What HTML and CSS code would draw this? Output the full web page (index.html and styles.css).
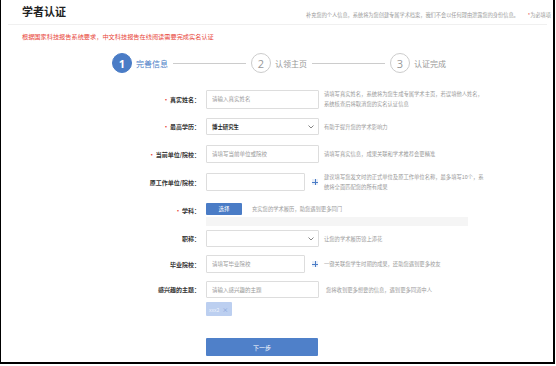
FILE: index.html
```html
<!DOCTYPE html>
<html lang="zh-CN">
<head>
  <meta charset="UTF-8" />
  <meta name="viewport" content="width=device-width, initial-scale=1.0"/>
  <title>学者认证</title>
  <link rel="stylesheet" href="styles.css">
</head>
<body>
  <div class="frame">
    <div class="header">
      <h1>学者认证</h1>
      <div class="notes">
        <span>补充您的个人信息，系统将为您创建专属学术档案，我们不会以任何理由泄露您的身份信息。</span>
        <span><i class="star">*</i>为必填项</span>
      </div>
    </div>

    <p class="notice">根据国家科技报告系统要求，中文科技报告在线阅读需要完成实名认证</p>

    <div class="steps">
      <div class="step active"><span class="num">1</span><span class="name">完善信息</span></div>
      <div class="bar"></div>
      <div class="step"><span class="num">2</span><span class="name">认领主页</span></div>
      <div class="bar"></div>
      <div class="step"><span class="num">3</span><span class="name">认证完成</span></div>
    </div>

    <div class="form">
      <div class="row r1">
        <label class="req">真实姓名：</label>
        <input type="text" placeholder="请输入真实姓名" />
        <p class="help">请填写真实姓名，系统将为您生成专属学术主页，若误填他人姓名，<br>系统核查后将取消您的实名认证信息</p>
      </div>

      <div class="row r2">
        <label class="req">最高学历：</label>
        <div class="select filled"><span>博士研究生</span>
          <svg width="6" height="4" viewBox="0 0 6 4"><path d="M0.5 0.5 L3 3 L5.5 0.5" fill="none" stroke="#666" stroke-width="0.8"/></svg>
        </div>
        <p class="help">有助于提升您的学术影响力</p>
      </div>

      <div class="row r3">
        <label class="req">当前单位/院校：</label>
        <input type="text" placeholder="请填写当前单位或院校" />
        <p class="help">请填写真实信息，成果关联和学术推荐会更精准</p>
      </div>

      <div class="row r4">
        <label>原工作单位/院校：</label>
        <input type="text" class="short" />
        <span class="plus"></span>
        <p class="help">建议填写您发文时的正式单位及原工作单位名称，最多填写10个，系<br>统将全面匹配您的所有成果</p>
      </div>

      <div class="row r5">
        <label class="req">学科：</label>
        <div class="subject">
          <div class="subject-top">
            <button class="pick">选择</button>
            <p class="help">充实您的学术履历，助您遇到更多同门</p>
          </div>
          <div class="subject-list"></div>
        </div>
      </div>

      <div class="row r6">
        <label>职称：</label>
        <div class="select"><span></span>
          <svg width="6" height="4" viewBox="0 0 6 4"><path d="M0.5 0.5 L3 3 L5.5 0.5" fill="none" stroke="#666" stroke-width="0.8"/></svg>
        </div>
        <p class="help">让您的学术履历锦上添花</p>
      </div>

      <div class="row r7">
        <label>毕业院校：</label>
        <input type="text" class="short" placeholder="请填写毕业院校" />
        <span class="plus"></span>
        <p class="help">一键关联您学生时期的成果，还助您遇到更多校友</p>
      </div>

      <div class="row r8">
        <label>感兴趣的主题：</label>
        <input type="text" placeholder="请输入感兴趣的主题" />
        <p class="help wide">您将收到更多想要的信息，遇到更多同道中人</p>
      </div>

      <div class="row r9">
        <label></label>
        <span class="tag">xxx2 <b>×</b></span>
      </div>

      <div class="row r10">
        <label></label>
        <button class="next">下一步</button>
      </div>
    </div>
  </div>
</body>
</html>
```

FILE: styles.css
```css
body {
  margin: 0;
  font-family: "Noto Sans CJK SC", "Noto Sans", sans-serif;
  background: #fff;
  color: #333;
}

.frame {
  width: 552px;
  height: 362px;
  border-left: 1px solid #000;
  border-right: 2px solid #000;
  border-bottom: 2px solid #000;
  overflow: hidden;
}

.header {
  display: flex;
  justify-content: space-between;
  align-items: flex-end;
  height: 25px;
  margin: 0 6px 0 7px;
  padding-left: 14px;
  border-bottom: 1px solid #f0f0f0;
  box-sizing: border-box;
}

.header h1 {
  margin: 0 0 7px;
  font-size: 11px;
  line-height: 12px;
  color: #222;
}

.notes {
  display: flex;
  gap: 9px;
  margin: 0 -4px 6px 0;
  font-size: 5.2px;
  line-height: 6px;
  color: #999;
}

.star {
  font-style: normal;
  color: #e53c32;
}

.notice {
  margin: 8px 0 0 21px;
  font-size: 6.2px;
  line-height: 7px;
  color: #e8463a;
}

.steps {
  display: flex;
  align-items: center;
  margin: 13px 0 0 111px;
}

.step {
  display: flex;
  align-items: center;
  gap: 4px;
}

.num {
  width: 18px;
  height: 18px;
  border: 1px solid #ccc;
  border-radius: 50%;
  display: flex;
  align-items: center;
  justify-content: center;
  font-family: "Open Sans", sans-serif;
  font-size: 11px;
  color: #999;
}

.name {
  font-size: 8px;
  color: #999;
}

.step.active .num {
  background: #4a7cc6;
  border-color: #4a7cc6;
  color: #fff;
  font-weight: bold;
}

.step.active .name {
  color: #4a7cc6;
}

.bar {
  width: 73px;
  height: 1px;
  background: #ccc;
  margin: 0 5px;
}

.form {
  margin-top: 16px;
}

.row {
  display: flex;
  align-items: center;
}

.row label {
  flex: 0 0 199px;
  text-align: right;
  margin-right: 6px;
  font-size: 6px;
  font-weight: bold;
  color: #333;
}

.row label.req::before {
  content: "•";
  color: #e8463a;
  margin-right: 1px;
}

.row input {
  width: 113px;
  height: 18px;
  box-sizing: border-box;
  border: 1px solid #ddd;
  border-radius: 1px;
  padding: 0 5px;
  font-family: inherit;
  font-size: 5.5px;
  color: #333;
  outline: none;
}

.row input.short {
  width: 99px;
}

.row input::placeholder {
  color: #999;
}

.select {
  width: 113px;
  height: 17px;
  box-sizing: border-box;
  border: 1px solid #ddd;
  border-radius: 1px;
  padding: 0 4px 0 5px;
  display: flex;
  align-items: center;
  justify-content: space-between;
  font-size: 5.4px;
}

.select.filled span {
  font-weight: bold;
  color: #222;
}

.help {
  margin: 0 0 0 5px;
  font-size: 5.3px;
  line-height: 10px;
  color: #999;
}

.help.wide {
  margin-left: 7px;
}

.plus {
  width: 6px;
  height: 6px;
  margin-left: 7px;
  margin-right: 1px;
  position: relative;
  background: #e8eef8;
}

.plus::before,
.plus::after {
  content: "";
  position: absolute;
  background: #4a7cc6;
}

.plus::before {
  left: 0;
  top: 2.5px;
  width: 6px;
  height: 1px;
}

.plus::after {
  left: 2.5px;
  top: 0;
  width: 1px;
  height: 6px;
}

.r1 { margin-bottom: 9px; }
.r1 input { height: 19px; }
.r2 { margin-bottom: 10px; }
.r3 { margin-bottom: 9px; }
.r4 { margin-bottom: 11px; }

.r5 {
  align-items: flex-start;
  margin-bottom: 4px;
}

.r5 label {
  margin-top: 3px;
}

.subject-top {
  display: flex;
  align-items: center;
  gap: 5px;
}

.pick {
  width: 36px;
  height: 12px;
  padding: 0;
  border: none;
  border-radius: 1px;
  background: #4a7cc6;
  color: #fff;
  font-family: inherit;
  font-size: 5.5px;
  cursor: pointer;
}

.subject-list {
  width: 262px;
  height: 9px;
  margin-top: 2px;
  background: #f5f5f5;
}

.r6 { margin-bottom: 8px; }
.r7 { margin-bottom: 8px; }
.r8 { margin-bottom: 4px; }
.r8 input { height: 17px; }

.tag {
  display: inline-flex;
  align-items: center;
  gap: 3px;
  height: 14px;
  padding: 0 4px 0 3px;
  box-sizing: border-box;
  background: #bccff0;
  border-radius: 1px;
  font-size: 5px;
  color: #eef3fc;
}

.tag b {
  font-weight: normal;
  font-size: 6px;
  color: #7d9cd6;
}

.r9 { margin-bottom: 22px; }

.next {
  width: 112px;
  height: 18px;
  border: none;
  border-radius: 1px;
  background: #4f80c9;
  color: #fff;
  font-family: inherit;
  font-size: 6px;
  cursor: pointer;
}
```
